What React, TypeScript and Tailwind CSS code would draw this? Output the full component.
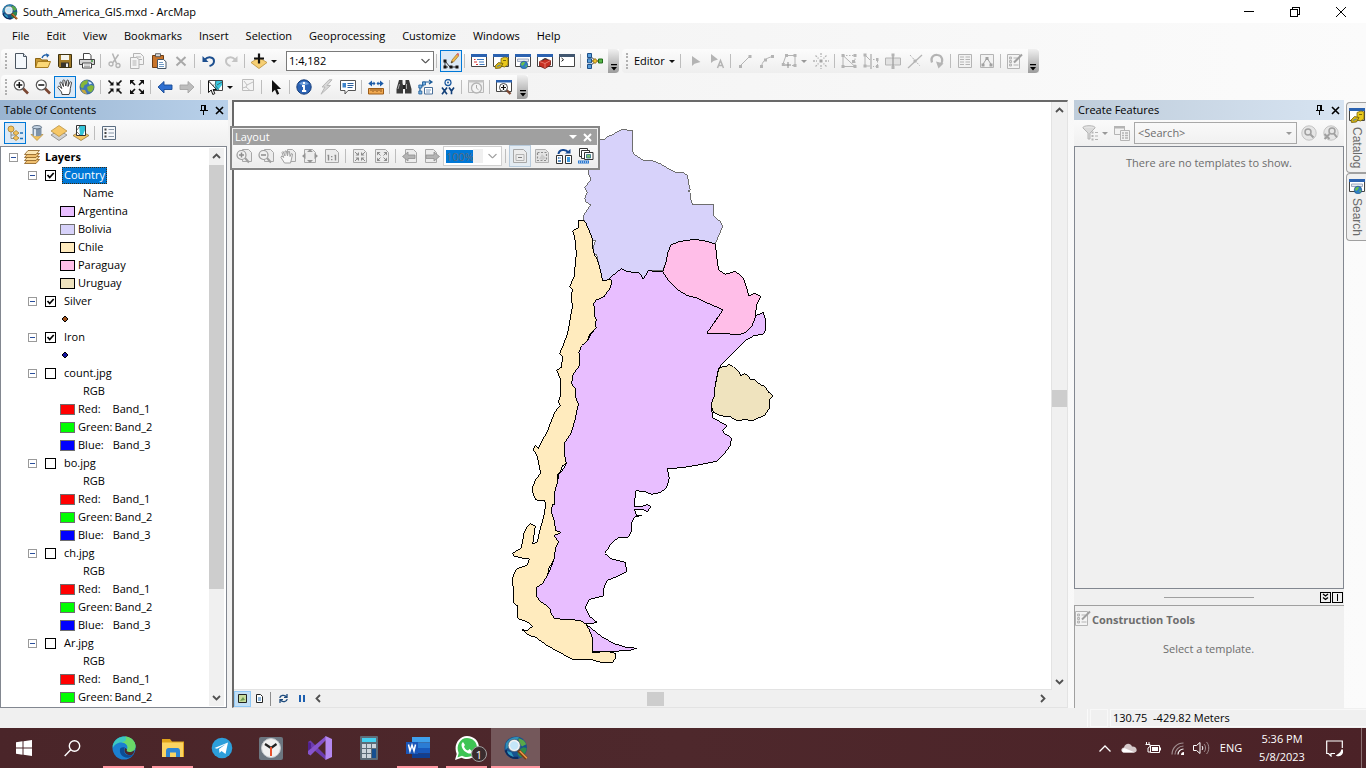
import React, { ReactNode, useState } from "react";

/* ---------- icon helpers ---------- */

function Svg({ children, className = "size-4", box = "0 0 16 16" }: { children: ReactNode; className?: string; box?: string }) {
  return (
    <svg viewBox={box} className={`${className} shrink-0`} fill="none" aria-hidden="true">
      {children}
    </svg>
  );
}

const G = "#b4b4b4";
const GL = "#e2e2e2";

const Globe = () => (
  <>
    <circle cx="7.8" cy="7.800" r="7.500" fill="#17528f" />
    <path d="M1.200 5C3 1.500 7 0 10 .9L8.500 3 5 3.500 3.500 7 1 9z" fill="#2f8fb8" />
    <path d="M9.500 1.500c2.500.3 4.500 2 5.300 4L12 7l-2-2.500z" fill="#58a848" />
    <path d="M10 9l3-1.500 2 .5c0 3-2 5.300-4 6.300L9 12z" fill="#2f8a4c" />
    <path d="M1 9.500C2.500 13.500 6 15.200 9.500 14.500" stroke="#0c2c60" strokeWidth="1.500" />
    <path d="M2 10l3 1 1.500 3C4 13.500 2.500 12 2 10z" fill="#2c9ac0" />
  </>
);

const icons: Record<string, ReactNode> = {
  arcmap: (
    <>
      <Globe />
      <path d="M9.500 9.500l5.500 5.500" stroke="#7a3b12" strokeWidth="2.200" />
      <path d="M10.500 10l4.800 4.800" stroke="#eb9a4c" strokeWidth="1" />
      <circle cx="6.800" cy="6.300" r="3.400" fill="#c4e6f8" stroke="#f2f2f2" strokeWidth="1.200" />
      <circle cx="6.800" cy="6.300" r="4.100" stroke="#5a6b78" strokeWidth=".5" />
    </>
  ),
  newDoc: (
    <>
      <path d="M2.500.5h8l3 3v12h-11z" fill="#f4f8fc" stroke="#4a5560" />
      <path d="M10.500.5v3h3" fill="#dbe6f2" stroke="#4a5560" />
    </>
  ),
  open: (
    <>
      <path d="M.5 14.500v-9h5l1 1.500h6v7.500z" fill="#c99a35" stroke="#8a6414" />
      <path d="M2.500 8.500h13l-2.500 6H.7z" fill="#fbd877" stroke="#a87c20" />
      <path d="M7 5c1-3 3-3.500 5-3" stroke="#1f5fa8" strokeWidth="1.300" />
      <path d="M11 .3L14.500 2 12 4.800z" fill="#1f5fa8" />
    </>
  ),
  save: (
    <>
      <path d="M1.500 1.500h13v13h-12l-1-1z" fill="#a07a28" stroke="#3e3210" />
      <path d="M4 2h8v5H4z" fill="#f4f4ee" />
      <path d="M4 9.500h8V14H4z" fill="#38342c" />
      <path d="M9 10.500h2V14H9z" fill="#eee" />
    </>
  ),
  print: (
    <>
      <path d="M4.500.5h6l1.500 2v5H4.500z" fill="#fff" stroke="#444" />
      <path d="M.5 6.500h15v5H.5z" fill="#d6d6d6" stroke="#444" />
      <path d="M3.500 10h9v5h-9z" fill="#fff" stroke="#444" />
      <path d="M5 12h6M5 13.500h6" stroke="#888" strokeWidth=".7" />
      <path d="M12 8h2" stroke="#3c9a3c" strokeWidth="1.500" />
    </>
  ),
  cut: (
    <>
      <path d="M5.500.5l4 10M11.500 1.500l-5.500 8" stroke={G} strokeWidth="1.500" />
      <circle cx="4" cy="11" r="2" stroke={G} strokeWidth="1.300" />
      <circle cx="11" cy="12.500" r="2" stroke={G} strokeWidth="1.300" />
    </>
  ),
  copy: (
    <>
      <path d="M4.500.5h7l3 3v8h-10z" fill="#f4f4f4" stroke={G} />
      <path d="M1.500 4.500h6l2.500 2v9H1.500z" fill="#f4f4f4" stroke={G} />
      <path d="M3.500 8h4M3.500 10h4M3.500 12h4M7 4h5M10 6.500h3" stroke={G} />
    </>
  ),
  paste: (
    <>
      <path d="M1.500 2.500h11v12h-11z" fill="#c8742a" stroke="#6d3c12" />
      <path d="M4.500.7h5v3h-5z" fill="#d8d8d8" stroke="#444" strokeWidth=".8" />
      <path d="M6.500 6.500h6l2.500 2.200v6.800H6.500z" fill="#fff" stroke="#456" />
      <path d="M8 9.500h4M8 11.500h5M8 13.500h5" stroke="#4c82b8" strokeWidth=".8" />
    </>
  ),
  del: <path d="M3.500 4l9 8.500M12.500 4l-9 8.500" stroke="#a8a8a8" strokeWidth="2" />,
  undo: (
    <>
      <path d="M4 6.500C7 3 13 4 13 8c0 3-2.500 4.500-4.500 5" stroke="#1d4f8f" strokeWidth="2" />
      <path d="M1.500 3v6h6z" fill="#1d4f8f" />
    </>
  ),
  redo: (
    <>
      <path d="M12 6.500C9 3 3 4 3 8c0 3 2.500 4.500 4.500 5" stroke="#c4c4c4" strokeWidth="2" />
      <path d="M14.500 3v6h-6z" fill="#c4c4c4" />
    </>
  ),
  addData: (
    <>
      <path d="M8 4.500l8 5-8 6-8-6z" fill="#f6cf74" stroke="#b98f38" strokeWidth=".8" />
      <path d="M8 .5v10M3 5.500h10" stroke="#111" strokeWidth="2.200" />
    </>
  ),
  editorTb: (
    <>
      <path d="M2 8l5 6 5 0M2 8v6h3M12 14h3" stroke="#222" strokeWidth=".9" />
      <path d="M.5 6.500h3v3h-3zM.5 12.500h3v3h-3zM6.500 12.500h3v3h-3zM12.500 12.500h3v3h-3z" fill="#111" />
      <path d="M8 10l1-3L14 1l2 1.500L10.500 9z" fill="#f0b84a" stroke="#8a6424" strokeWidth=".6" />
      <path d="M14 .6l2 1.500" stroke="#d86a6a" strokeWidth="2" />
      <path d="M8 10.300l2-1.200-1.200-1z" fill="#222" />
    </>
  ),
  tableWin: (
    <>
      <path d="M.5 1.500h15v12H.5z" fill="#fff" stroke="#444" />
      <path d="M0 1h16v3H0z" fill="#2b62b0" />
      <path d="M3 6.500h1.500M3 9h3M5 11.500h2" stroke="#d33" strokeWidth="1.200" />
      <path d="M6 6.500h7M8 9h5M8.500 11.500h5" stroke="#3b78c0" strokeWidth="1.200" />
    </>
  ),
  catalogWin: (
    <>
      <path d="M.5 1.500h15v12H.5z" fill="#fff" stroke="#444" />
      <path d="M0 1h16v3H0z" fill="#2b62b0" />
      <path d="M8 5.500l4-1.500 3 1V12l-3.500 2-3.500-1z" fill="#e8c81c" stroke="#7d680a" strokeWidth=".8" />
      <path d="M10 7.500h3" stroke="#7d680a" />
      <path d="M2 13l3.500-3.500 4.500 1-2.500 4.500-5 .5z" fill="#d6b412" stroke="#6d5a08" strokeWidth=".8" />
      <path d="M4 13.500l3.500-1.500" stroke="#5c86a6" strokeWidth="1.300" />
    </>
  ),
  searchWin: (
    <>
      <path d="M.5 1.500h15v12H.5z" fill="#fff" stroke="#444" />
      <path d="M0 1h16v3H0z" fill="#2b62b0" />
      <path d="M2.500 6h11v2.500h-11z" fill="#e5eaf2" stroke="#8a98b0" strokeWidth=".8" />
      <circle cx="9" cy="12" r="3.800" fill="#2f7fc4" stroke="#1a4d80" strokeWidth=".6" />
      <path d="M6 11c1-2 3-2.300 4-1.700L9 11.500l-2 1.500zM10 13l2.300-1-1 2.500z" fill="#6cc04a" />
    </>
  ),
  toolboxWin: (
    <>
      <path d="M.5 1.500h15v12H.5z" fill="#fff" stroke="#444" />
      <path d="M0 1h16v3H0z" fill="#2b62b0" />
      <path d="M2.500 8.500l6-2.500 5 1.500v4.500l-5.500 3.500-5.500-2.500z" fill="#c62f22" stroke="#6f1610" strokeWidth=".8" />
      <path d="M2.500 8.500L8 10.500l5.500-3M8 10.500V15" stroke="#f08a7c" strokeWidth=".8" />
      <path d="M5.500 7L8 5.500l2.500 1" stroke="#333" strokeWidth="1.100" />
    </>
  ),
  pythonWin: (
    <>
      <path d="M.5 1.500h15v12H.5z" fill="#fff" stroke="#444" />
      <path d="M0 1h16v3H0z" fill="#41566f" />
      <path d="M2.500 5l2 1.700-2 1.700" stroke="#111" />
    </>
  ),
  model: (
    <>
      <path d="M3 3l6 5M3 8h8M3 13l6-5" stroke="#444" />
      <path d="M.5.5h4v4h-4zM.5 5.800h4v4h-4zM.5 11.500h4v4h-4z" fill="#5ba0dc" stroke="#1c4f88" />
      <path d="M5.500 8L8 5.500 10.500 8 8 10.500z" fill="#f2c12e" stroke="#8d6a0c" />
      <path d="M11.500 6h4v4h-4z" fill="#58b848" stroke="#226a1c" />
    </>
  ),
  zoomIn: (
    <>
      <path d="M10 9.500l5 5" stroke="#7a4632" strokeWidth="2.600" />
      <circle cx="6.300" cy="6" r="5" fill="#fff" stroke="#555" strokeWidth="1.200" />
      <path d="M6.300 3v6M3.300 6h6" stroke="#111" strokeWidth="1.500" />
    </>
  ),
  zoomOut: (
    <>
      <path d="M10 9.500l5 5" stroke="#7a4632" strokeWidth="2.600" />
      <circle cx="6.300" cy="6" r="5" fill="#fff" stroke="#555" strokeWidth="1.200" />
      <path d="M3.300 6h6" stroke="#111" strokeWidth="1.500" />
    </>
  ),
  pan: (
    <path
      d="M5 15.500L4.500 13 .8 8.500c0-1.500 1.200-1.500 2 -.8L4.800 9.500 2.800 4c.2-1.400 1.500-1.200 1.900-.2L6.500 7.500 5.800 1.800C6.200.5 7.500.6 7.800 1.800L8.800 7 9.800 1.800c.4-1.200 1.700-1 1.700.3L11 7.500l1.800-4.200c.8-1 1.900-.5 1.700.6L13.300 9.500l-.3 3.500-1 2.500z"
      fill="#fff"
      stroke="#333"
      strokeWidth=".9"
    />
  ),
  fullExtent: (
    <>
      <circle cx="8" cy="8" r="7" fill="#3f78b8" stroke="#23507e" strokeWidth=".8" />
      <path d="M2 5c2-3.500 5-4 7-3.500L8 5 5.500 6 4 9.500 1.500 8zM8 8l4-2 2.700 1c.2 3-1 5-3 6.300L9 12z" fill="#86b838" />
      <path d="M9 2.500c2 0 3.500 1 4 2l-2.500 1z" fill="#d8ecfa" />
      <path d="M2 10.500c1 3 3.500 4.500 6 4.500l-2-4z" fill="#c8a83c" />
    </>
  ),
  zoomInFixed: (
    <>
      <path d="M1.500 1.500l4 4M14.500 1.500l-4 4M1.500 14.500l4-4M14.500 14.500l-4-4" stroke="#111" strokeWidth="1.700" />
      <path d="M6.500 2.500v4h-4zM9.500 2.500v4h4zM6.500 13.500v-4h-4zM9.500 13.500v-4h4z" fill="#111" />
    </>
  ),
  zoomOutFixed: (
    <>
      <path d="M2.500 2.500l3.500 3.500M13.500 2.500L10 6M2.500 13.500L6 10M13.500 13.500L10 10" stroke="#111" strokeWidth="1.700" />
      <path d="M1 1h4.500L1 5.500zM15 1h-4.500L15 5.500zM1 15h4.500L1 10.500zM15 15h-4.500l4.500-4.500z" fill="#111" />
    </>
  ),
  back: <path d="M1 8l6-5.500V6h8v4.500H7V14z" fill="#2f6fd0" stroke="#174a94" strokeWidth=".9" />,
  forward: <path d="M15 8L9 2.500V6H1v4.500h8V14z" fill="#bdbdbd" stroke="#a5a5a5" strokeWidth=".9" />,
  selectFeat: (
    <>
      <path d="M1.500 1.500h14v10h-14z" fill="#fff" stroke="#444" />
      <path d="M8 2h7v4l-4 5H8z" fill="#38c8e0" />
      <path d="M9 2L8 6l4 5M10 6l5-3M2 8l5-2" stroke="#444" strokeWidth=".7" />
      <path d="M1.500 2v11.500l2.700-2.500 1.600 4.500 2-.9L6.100 10.500h3.500z" fill="#fff" stroke="#111" />
    </>
  ),
  clearSel: (
    <>
      <path d="M2.500.5h11v11h-11z" fill="#f4f4f4" stroke="#bcbcbc" />
      <path d="M4 2l3 4 6-3M7 6l-1 2 4 3.500M6 8l-3.500 1" stroke="#c0c0c0" />
    </>
  ),
  pointer: <path d="M4 1v12.500l3-2.800 2 5 2.200-1-2.100-4.700h4z" fill="#111" />,
  identify: (
    <>
      <circle cx="8" cy="8" r="7.200" fill="#2a62b4" stroke="#173f7c" />
      <path d="M3 5c2-3.500 8-3.500 10 0-3 1.500-7 1.500-10 0z" fill="#6f9fdc" />
      <path d="M8 3v2M6 7h2v5M6 12h4.200" stroke="#fff" strokeWidth="1.900" />
    </>
  ),
  hyperlink: <path d="M11 .8L4 8h3l-4 7.200L12.500 6.500H9l5-5.700z" fill="#d8d8d8" stroke="#b8b8b8" />,
  popup: (
    <>
      <path d="M.5 1.500h15v10H8l-3 3.500v-3.500H.5z" fill="#fff" stroke="#555" />
      <path d="M2.500 4h3.500v4.500H2.500z" fill="#3d84cc" />
      <path d="M7.500 4.500h6M7.500 6.500h6M7.500 8.500h5" stroke="#2b5f9c" />
    </>
  ),
  measure: (
    <>
      <path d="M.5 9.500h15v5.500H.5z" fill="#f0a850" stroke="#9c5c18" />
      <path d="M3 10v2M5 10v3M7 10v2M9 10v3M11 10v2M13 10v3" stroke="#7a4410" strokeWidth=".8" />
      <path d="M2 4.500h5M9 4.500h5" stroke="#1d5ca8" strokeWidth="1.500" />
      <path d="M4 1.500L.3 4.500 4 7.500zM12 1.500l3.700 3-3.700 3zM5.500 2.500L7.500 4.500l-2 2zM10.500 2.500L8.500 4.500l2 2z" fill="#1d5ca8" />
    </>
  ),
  find: (
    <>
      <path d="M3 1h3.500v3L7 6v8.500H.5V10zM13 1H9.500v3L9 6v8.500h6.500V10z" fill="#3a3a3a" />
      <path d="M7 6h2v4H7z" fill="#222" />
      <path d="M3.500 5L2 10M10.500 5v5" stroke="#a8a8a8" />
    </>
  ),
  findRoute: (
    <>
      <path d="M2 14V7h3v-4h8M11 1l3 2-3 2" stroke="#1d5c98" strokeWidth="1.200" />
      <path d="M.8 12h3v3h-3zM.8 6h3v3h-3zM4.500 3h3v3h-3z" fill="#7ab4e4" stroke="#1d5c98" strokeWidth=".8" />
      <path d="M6.500 8.500h8v6.500h-8z" fill="#fff" stroke="#4a6f98" />
      <path d="M8 11h5M8 13h4" stroke="#7c9cc0" />
    </>
  ),
  gotoXY: (
    <>
      <circle cx="8" cy="3.500" r="3" stroke="#1b5aa0" strokeWidth="1.300" />
      <circle cx="8" cy="3.500" r="1" fill="#1b5aa0" />
      <path d="M2 8.500l5 6.800M7 8.500l-5 6.800M9 8.500l2.500 3.500L14 8.500M11.500 12v3.300" stroke="#123f78" strokeWidth="1.600" />
    </>
  ),
  timeSlider: (
    <>
      <path d="M.5 1.500h15v12H.5z" fill="#efefef" stroke="#b8b8b8" />
      <path d="M0 1h16v2.500H0z" fill="#c4c4c4" />
      <circle cx="8.500" cy="9" r="5" fill="#f4f4f4" stroke="#b4b4b4" strokeWidth="1.300" />
      <path d="M8.500 6v3.200l2 1.500" stroke="#a8a8a8" />
    </>
  ),
  viewer: (
    <>
      <path d="M.5 1.500h15v11H.5z" fill="#fff" stroke="#444" />
      <path d="M0 1h16v2.500H0z" fill="#2b62b0" />
      <path d="M10.500 11l4 4" stroke="#7a4632" strokeWidth="2.400" />
      <circle cx="7.500" cy="8.500" r="4" fill="#fff" stroke="#444" />
      <path d="M7.500 6v5M5 8.500h5" stroke="#111" strokeWidth="1.200" />
    </>
  ),
  edit1: <path d="M5 3v10l2.500-2.200 6-1.800z" fill={G} />,
  edit2: (
    <>
      <path d="M2 1v9l2.500-2L9 6.500z" fill={G} />
      <path d="M8.500 15l3-7.500 3 7.500M9.500 12.500h4" stroke={G} strokeWidth="1.500" />
    </>
  ),
  segLine: (
    <>
      <path d="M3 13L13 3" stroke={G} />
      <path d="M2 12h3v3H2zM11.500 2h3v3h-3z" fill={G} />
    </>
  ),
  segArc: (
    <>
      <path d="M2.500 14C3 9 6 5 14 3.500" stroke={G} />
      <path d="M1 12h3v3H1zM5 5.500h3v3H5zM12 2h3v3h-3z" fill={G} />
    </>
  ),
  trace: (
    <>
      <path d="M5 2.500h9v10h-3M5 2.500L2 11l2 2" stroke={G} />
      <path d="M4 1h3v3H4zM12.500 1h3v3h-3zM12.500 11h3v3h-3zM.8 10h3v3h-3z" fill={G} />
      <path d="M7 9v6M4 12h6" stroke="#8c8c8c" />
    </>
  ),
  point: (
    <>
      <path d="M8 0v4M8 12v4M0 8h4M12 8h4M2.500 2.500l3 3M13.500 2.500l-3 3M2.500 13.500l3-3M13.500 13.500l-3-3" stroke={G} strokeDasharray="2 1" strokeWidth="1.300" />
      <path d="M6.500 6.500h3v3h-3z" fill="#a4a4a4" />
    </>
  ),
  editVert: (
    <>
      <path d="M2 2.500h12v11" stroke={G} strokeDasharray="1.500 1.500" />
      <path d="M2 2.500v11h12L2 2.500" stroke={G} />
      <path d="M.5 1h3v3h-3zM.5 12h3v3h-3zM12.500 12h3v3h-3zM12.500 1h3v3h-3zM11 7h3v3h-3z" fill={G} />
    </>
  ),
  reshape: (
    <>
      <path d="M2 2v11h5M2 2l5 5" stroke={G} />
      <path d="M8 1v15" stroke="#999" />
      <path d="M10 6.500h4.500v7H10" stroke={G} strokeDasharray="1.500 1.500" />
      <path d="M.5.500h3v3h-3zM.5 11.500h3v3h-3zM13 5h2.500v3H13zM13 12h2.500v3H13z" fill={G} />
    </>
  ),
  cutPoly: (
    <>
      <path d="M.5 5h15v7H.5z" fill={GL} stroke={G} />
      <path d="M8 2v13" stroke="#999" strokeWidth="1.200" />
      <path d="M6.500.500h3v3h-3zM6.500 13h3v3h-3z" fill={G} />
    </>
  ),
  split: (
    <>
      <path d="M1 15L15 2" stroke={G} strokeWidth="1.300" />
      <path d="M3 2l10 11" stroke={G} strokeDasharray="2 1.500" />
      <path d="M6.500 6.500h3v3h-3z" fill={G} />
    </>
  ),
  rotate: (
    <>
      <path d="M3 9.500C1 4 5 1.500 8.500 2c5 .5 6 6 3 9.500" stroke={G} strokeWidth="2.200" />
      <path d="M7 8.500l7.500 2-5 5z" fill={G} />
    </>
  ),
  attrTable: (
    <>
      <path d="M1.500 1.500h13v13h-13z" fill="#f2f2f2" stroke={G} />
      <path d="M3 4h4M3 6.500h4M3 9h4M3 11.500h4M8.500 4H13M8.500 6.500H13M8.500 9H13M8.500 11.500H13" stroke={G} />
    </>
  ),
  sketchProp: (
    <>
      <path d="M1.500 1.500h13v13h-13z" fill="#f2f2f2" stroke={G} />
      <path d="M3.500 12L8 5l4.500 7" stroke="#a0a0a0" />
      <path d="M2.500 10.500h3v3h-3zM6.500 4h3v3h-3zM10.500 10.500h3v3h-3z" fill="#a0a0a0" />
    </>
  ),
  createFeat: (
    <>
      <path d="M.5 1.500h12v14H.5z" fill="#f4f4f4" stroke={G} />
      <path d="M2.500 4h2v2h-2zM2.500 7.500h2v2h-2zM2.500 11h2v2h-2z" stroke={G} fill="#ddd" />
      <path d="M6.500 5h4M6.500 12h5" stroke={G} />
      <path d="M7 9.500L15 1.500" stroke="#a0a0a0" strokeWidth="2" />
    </>
  ),
  tocOrder: (
    <>
      <circle cx="4" cy="4" r="3" fill="#f4c35c" stroke="#9c7424" strokeWidth=".7" />
      <path d="M4 7v6.500h5M4 10h4" stroke="#777" strokeWidth=".8" />
      <path d="M9 5.500l3 2.500-3 2.500L6 8zM9 10.500l3 2.500-3 2.500L6 13z" fill="#f4c35c" stroke="#9c7424" strokeWidth=".7" />
      <path d="M13 8h3M13 13.500h3" stroke="#1d6fb8" strokeWidth="1.500" />
    </>
  ),
  tocSource: (
    <>
      <path d="M2 9.500h12l-6 6z" fill="#f4c35c" stroke="#b08838" strokeWidth=".7" />
      <path d="M3.500 2v8c0 1.800 9 1.800 9 0V2z" fill="#7f93a8" />
      <path d="M5 3v8h2V3z" fill="#dce6f0" />
      <ellipse cx="8" cy="2.200" rx="4.500" ry="1.700" fill="#c4d4e4" stroke="#4a5c70" strokeWidth=".8" />
    </>
  ),
  tocVisible: (
    <>
      <path d="M8 5l8 5-8 5.500L0 10z" fill="#d0d0d0" stroke="#777" strokeWidth=".7" />
      <path d="M8 .5l8 5.500-8 5.500L0 6z" fill="#f6c766" stroke="#b08838" strokeWidth=".7" />
    </>
  ),
  tocSelect: (
    <>
      <path d="M8 6l8 4.500-8 5L0 10.500z" fill="#f6c766" stroke="#8d6f30" strokeWidth=".7" />
      <path d="M3.500.500h9v10h-9z" fill="#fff" stroke="#333" />
      <path d="M6 1h6v4l-2 5H7z" fill="#34c4d8" />
      <path d="M4 5l3-4M7 10l-3-3" stroke="#444" strokeWidth=".7" />
    </>
  ),
  tocOptions: (
    <>
      <path d="M1.500 1.500h13v13h-13z" fill="#f6f8fb" stroke="#5a6c80" />
      <path d="M3.500 3.500h2v2h-2zM3.500 7h2v2h-2zM3.500 10.500h2v2h-2z" fill="#444" />
      <path d="M7.500 4.500H13M7.500 8H13M7.500 11.500H13" stroke="#8a98a8" />
    </>
  ),
  layers: (
    <>
      <path d="M4 10.500h11.500L12 14.500H.5z" fill="#f0c070" stroke="#8a5c1c" strokeWidth=".8" />
      <path d="M4 7.500h11.500L12 11.500H.5z" fill="#fadb9a" stroke="#8a5c1c" strokeWidth=".8" />
      <path d="M4 4.500h11.500L12 8.500H.5z" fill="#f0c070" stroke="#8a5c1c" strokeWidth=".8" />
      <path d="M4 1.500h11.500L12 5.500H.5z" fill="#fde7b4" stroke="#8a5c1c" strokeWidth=".8" />
    </>
  ),
  pgZoomIn: (
    <>
      <path d="M6.500 1.500h6l3 3v9h-9z" fill="#ececec" stroke="#a8a8a8" />
      <path d="M9 10l4 4.500" stroke="#a0a0a0" strokeWidth="2" />
      <circle cx="5.500" cy="7" r="4.500" fill="#f0f0f0" stroke="#9c9c9c" strokeWidth="1.200" />
      <path d="M5.500 4.500v5M3 7h5" stroke="#8c8c8c" strokeWidth="1.500" />
    </>
  ),
  pgZoomOut: (
    <>
      <path d="M6.500 1.500h6l3 3v9h-9z" fill="#ececec" stroke="#a8a8a8" />
      <path d="M9 10l4 4.500" stroke="#a0a0a0" strokeWidth="2" />
      <circle cx="5.500" cy="7" r="4.500" fill="#f0f0f0" stroke="#9c9c9c" strokeWidth="1.200" />
      <path d="M3 7h5" stroke="#8c8c8c" strokeWidth="1.500" />
    </>
  ),
  pgPan: (
    <>
      <path d="M7.500 1.500h5l3 3v9h-8z" fill="#ececec" stroke="#a8a8a8" />
      <path d="M4.500 15L1 9.500 1.700 8l2 1.500L2 4.500l1-1L5 8V3h1.300L7.500 8l.8-4.500h1.200L10 8.500l1.500-3 1 .5-1 5-1 4z" fill="#f8f8f8" stroke="#a0a0a0" />
    </>
  ),
  pgWhole: (
    <>
      <path d="M2.500 1.500h8l3 3v10h-11z" fill="#ececec" stroke="#a8a8a8" />
      <path d="M8 1l3 3H5zM8 15l3-3H5zM0 8l3.500-3v6zM16 8l-3.500-3v6z" fill="#959595" />
    </>
  ),
  pg100: (
    <>
      <path d="M1.500 1.500h10l3 3v10h-13z" fill="#ececec" stroke="#a8a8a8" />
      <path d="M3.500 7.500h1v5M10.500 7.500h1v5M7.700 8v1.200M7.700 11v1.200" stroke="#8c8c8c" strokeWidth="1.400" />
    </>
  ),
  pgFixIn: (
    <>
      <path d="M1.500 1.500h10l3 3v10h-13z" fill="#ececec" stroke="#a8a8a8" />
      <path d="M3 4l3 3M13 4l-3 3M3 13l3-3M13 13l-3-3" stroke="#8c8c8c" />
      <path d="M7 4v3.500H3.500zM9 4v3.500h3.500zM7 13V9.500H3.500zM9 13V9.500h3.500z" fill="#8c8c8c" />
    </>
  ),
  pgFixOut: (
    <>
      <path d="M1.500 1.500h10l3 3v10h-13z" fill="#ececec" stroke="#a8a8a8" />
      <path d="M3.500 4.500l3 3M12.500 4.500l-3 3M3.500 12.500l3-3M12.500 12.500l-3-3" stroke="#8c8c8c" />
      <path d="M3 4h3.500L3 7.500zM13 4H9.500L13 7.500zM3 13h3.500L3 9.500zM13 13H9.500L13 9.500z" fill="#8c8c8c" />
    </>
  ),
  pgBack: (
    <>
      <path d="M3.500 1.500h8l3 3v10h-11z" fill="#ececec" stroke="#a8a8a8" />
      <path d="M.5 8.500L6 4v3h7v3.500H6V13z" fill="#b4b4b4" stroke="#909090" strokeWidth=".8" />
    </>
  ),
  pgFwd: (
    <>
      <path d="M1.500 1.500h8l3 3v10h-11z" fill="#ececec" stroke="#a8a8a8" />
      <path d="M15.500 8.500L10 4v3H2v3.500h8V13z" fill="#b4b4b4" stroke="#909090" strokeWidth=".8" />
    </>
  ),
  draft: (
    <>
      <path d="M1.500 1.500h10l3 3v10h-13z" fill="#ececec" stroke="#a8a8a8" />
      <path d="M4 6.500h8v6H4z" stroke={G} />
      <path d="M6 9.500h4" stroke="#808080" />
    </>
  ),
  focus: (
    <>
      <path d="M1.500 1.500h10l3 3v10h-13z" fill="#e4e4e4" stroke="#b0b0b0" />
      <path d="M3.500 4.500h9v8h-9z" stroke="#8c8c8c" strokeDasharray="2 1.500" strokeWidth="1.200" />
      <path d="M5 11l3-5 4 4-3 2z" fill="#cacaca" />
    </>
  ),
  changeLayout: (
    <>
      <path d="M.5 7.500h6v8h-6zM9.500 7.500h6v8h-6z" fill="#fff" stroke="#333" />
      <path d="M11 9h3v5h-3z" fill="#3d9ae0" />
      <path d="M2 10h1.500M4.500 10H5M2 13h3" stroke="#2b6fb0" strokeWidth="1.500" />
      <path d="M2.500 6C3 1 10 1 12 4" stroke="#174a94" strokeWidth="2" />
      <path d="M9 5.500h5.500V1z" fill="#174a94" />
    </>
  ),
  dataDriven: (
    <>
      <path d="M1.500.500h8v8h-8z" fill="#fff" stroke="#333" />
      <path d="M3.500 2.500h8v8h-8z" fill="#fff" stroke="#333" />
      <path d="M6.500 4.500h8.500v7H6.500z" fill="#fff" stroke="#333" />
      <path d="M8.500 6.500h4v3.500h-4z" fill="#7fc06a" stroke="#2d6f8c" strokeWidth=".8" />
      <path d="M0 12.500h11v3H0z" fill="#2b78d0" />
      <path d="M1 14h9" stroke="#fff" strokeDasharray="1 1" />
    </>
  ),
  filter: (
    <>
      <ellipse cx="7" cy="2.500" rx="6" ry="1.800" fill="#e4e4e4" stroke={G} />
      <path d="M1 3l5 5v6h2V8l5-5" fill="#dadada" stroke={G} />
      <path d="M9.500 6.500h2v2h-2zM9.500 10h2v2h-2zM9.500 13.500h2v2h-2z" fill={G} />
      <path d="M13 7.500h3M13 11h3M13 14.500h3" stroke={G} />
    </>
  ),
  organize: (
    <>
      <path d="M.5 1.500h10v8H.5z" fill="#f2f2f2" stroke={G} />
      <path d="M0 1h11v2.500H0z" fill={G} />
      <path d="M6.500 5.500h9v10h-9z" fill="#f2f2f2" stroke={G} />
      <path d="M8 8h2M8 10.500h2M8 13h2M11 8h3M11 10.500h3M11 13h3" stroke={G} strokeWidth="1.300" />
    </>
  ),
  searchGo: (
    <>
      <circle cx="8" cy="8" r="7.200" fill="#e6e6e6" stroke="#c4c4c4" />
      <circle cx="7" cy="7" r="3" stroke="#a0a0a0" strokeWidth="1.500" />
      <path d="M9.500 9.500l3 3" stroke="#a0a0a0" strokeWidth="2" />
    </>
  ),
  searchClear: (
    <>
      <circle cx="8" cy="8" r="7.200" fill="#e6e6e6" stroke="#c4c4c4" />
      <circle cx="9" cy="6" r="3" stroke="#a0a0a0" strokeWidth="1.500" />
      <path d="M11 8.500l3 4M1.500 9l5 5M6.500 9l-5 5" stroke="#a0a0a0" strokeWidth="2" />
    </>
  ),
};

function Icon({ name, className }: { name: string; className?: string }) {
  return <Svg className={className}>{icons[name]}</Svg>;
}

/* ---------- toolbar parts ---------- */

function Tool({ name, label, active, off }: { name: string; label: string; active?: boolean; off?: boolean }) {
  return (
    <button
      aria-label={label}
      disabled={off}
      className={`flex h-[22px] w-[22px] shrink-0 items-center justify-center ${active ? "border border-[#0078d7] bg-[#dbe9f6]" : ""}`}
    >
      <Icon name={name} />
    </button>
  );
}

const Sep = () => <span className="mr-[3px] ml-[2px] h-3.5 w-px shrink-0 bg-[#bdbdbd]" />;
const Grip = () => <span className="mr-[3px] ml-1 h-4 w-0 shrink-0 border-l-2 border-dotted border-[#b0b0b0]" />;

function Caret({ color = "#111", label }: { color?: string; label: string }) {
  return (
    <button aria-label={label} className="flex h-[22px] w-2 shrink-0 items-center justify-center">
      <svg viewBox="0 0 6 3" className="h-[3px] w-1.5">
        <path d="M0 0h6L3 3z" fill={color} />
      </svg>
    </button>
  );
}

function Overflow() {
  return (
    <button aria-label="Toolbar options" className="ml-0.5 flex h-6 w-[11px] shrink-0 items-end justify-center rounded-r-sm bg-linear-to-b from-[#f0f0f0] to-[#9c9c9c] pb-0.5">
      <svg viewBox="0 0 6 7" className="h-[7px] w-1.5">
        <path d="M0 0h6v1.300H0zM0 3h6L3 6.500z" fill="#000" />
      </svg>
    </button>
  );
}

function Bar({ children }: { children: ReactNode }) {
  return <div className="flex h-6 items-center rounded-l bg-linear-to-b from-[#fcfcfc] to-[#eeeeee]">{children}</div>;
}

function Arrow({ dir, label, className = "" }: { dir: "up" | "down" | "left" | "right"; label: string; className?: string }) {
  const d = { up: "M1 6l3.500-3.500L8 6", down: "M1 3l3.500 3.500L8 3", left: "M6 1L2.500 4.500 6 8", right: "M3 1l3.500 3.500L3 8" }[dir];
  return (
    <button aria-label={label} className={`flex shrink-0 items-center justify-center ${className}`}>
      <svg viewBox="0 0 9 9" className="size-[9px]" fill="none">
        <path d={d} stroke="#505050" strokeWidth="1.800" />
      </svg>
    </button>
  );
}

function PanelTitle({ title, className }: { title: string; className: string }) {
  return (
    <div className={`flex h-5 shrink-0 items-center pr-px pl-1 ${className}`}>
      <h2 className="flex-1">{title}</h2>
      <button aria-label={`Pin ${title}`} className="flex size-4 items-center justify-center">
        <svg viewBox="0 0 9 10" className="h-2.5 w-[9px]" fill="none" stroke="#000">
          <path d="M2.500 5.500v-5h4v5M5.500 0v5.500M.5 5.500h8M4.500 6v4" shapeRendering="crispEdges" />
        </svg>
      </button>
      <button aria-label={`Close ${title}`} className="flex size-4 items-center justify-center">
        <svg viewBox="0 0 9 9" className="size-[9px]" fill="none">
          <path d="M1 1l7 7M8 1L1 8" stroke="#000" strokeWidth="1.600" />
        </svg>
      </button>
    </div>
  );
}

/* ---------- table of contents ---------- */

function Toggle({ label }: { label: string }) {
  return (
    <button aria-label={`Collapse ${label}`} className="flex size-[9px] shrink-0 items-center justify-center border border-[#9a9a9a] bg-white">
      <span className="h-px w-[5px] bg-[#2b4f9c]" />
    </button>
  );
}

function LayerRow({ name, on, selected }: { name: string; on?: boolean; selected?: boolean }) {
  const [checked, setChecked] = useState(!!on);
  return (
    <li className="flex h-[18px] items-center pl-[27px]">
      <Toggle label={name} />
      <label className="flex items-center">
        <span className="relative ml-2 flex size-[11px]">
          <input type="checkbox" checked={checked} onChange={() => setChecked(!checked)} className="size-[11px] appearance-none border border-black bg-white" />
          {checked && (
            <svg viewBox="0 0 11 11" className="pointer-events-none absolute inset-0 size-[11px]" fill="none">
              <path d="M2.500 5l2.200 2.500L8.700 3" stroke="#000" strokeWidth="1.700" />
            </svg>
          )}
        </span>
        <span className={`ml-1.5 flex items-center px-0.5 ${selected ? "h-[17px] bg-[#0078d7] text-white outline outline-dotted outline-[#3b2a10] -outline-offset-1" : ""}`}>{name}</span>
      </label>
    </li>
  );
}

function Swatch({ color, border = "#000", label, value }: { color: string; border?: string; label: string; value?: string }) {
  return (
    <li className="flex h-[18px] items-center pl-[59px]">
      <span className="h-[11px] w-[15px] border" style={{ backgroundColor: color, borderColor: border }} />
      <span className="ml-[3px]">{label}</span>
      {value && <span className={label === "Green:" ? "ml-[2px]" : label === "Red:" ? "ml-3" : "ml-[9px]"}>{value}</span>}
    </li>
  );
}

const Heading = ({ text }: { text: string }) => <li className="flex h-[18px] items-center pl-[82px]">{text}</li>;

const Marker = ({ color }: { color: string }) => (
  <li className="flex h-[18px] items-center pl-[61px]">
    <svg viewBox="0 0 6 6" className="size-1.5">
      <path d="M3 0l3 3-3 3-3-3z" fill={color} stroke="#000" />
    </svg>
  </li>
);

const countries = [
  { label: "Argentina", color: "#e8beff", border: "#000" },
  { label: "Bolivia", color: "#d7d2fa", border: "#6e6e6e" },
  { label: "Chile", color: "#ffebbe", border: "#000" },
  { label: "Paraguay", color: "#ffbee8", border: "#000" },
  { label: "Uruguay", color: "#efe3be", border: "#000" },
];

function Raster({ name, last }: { name: string; last?: boolean }) {
  return (
    <>
      <LayerRow name={name} />
      <Heading text="RGB" />
      <Swatch color="#f00" border="#6e6e6e" label="Red:" value="Band_1" />
      <Swatch color="#0f0" border="#6e6e6e" label="Green:" value="Band_2" />
      {!last && <Swatch color="#00f" border="#6e6e6e" label="Blue:" value="Band_3" />}
    </>
  );
}

function Contents() {
  return (
    <aside className="flex w-[228px] shrink-0 flex-col">
      <PanelTitle title="Table Of Contents" className="bg-linear-to-r from-[#99b4d1] to-[#b9d1ea]" />
      <div className="flex h-[26px] shrink-0 items-center bg-linear-to-b from-[#fafafa] to-[#efefef] pl-1">
        <Tool name="tocOrder" label="List By Drawing Order" active />
        <Tool name="tocSource" label="List By Source" />
        <Tool name="tocVisible" label="List By Visibility" />
        <Tool name="tocSelect" label="List By Selection" />
        <Sep />
        <Tool name="tocOptions" label="Options" />
      </div>
      <div className="mr-px flex min-h-0 flex-1 border border-[#828790] bg-white py-px pr-px">
        <ul className="min-w-0 flex-1 overflow-hidden">
          <li className="flex h-[18px] items-center pl-2 font-bold">
            <Toggle label="Layers" />
            <Icon name="layers" className="ml-1.5 size-4" />
            <span className="ml-[5px]">Layers</span>
          </li>
          <LayerRow name="Country" on selected />
          <Heading text="Name" />
          {countries.map((c) => (
            <Swatch key={c.label} {...c} />
          ))}
          <LayerRow name="Silver" on />
          <Marker color="#a0521c" />
          <LayerRow name="Iron" on />
          <Marker color="#1414a0" />
          <Raster name="count.jpg" />
          <Raster name="bo.jpg" />
          <Raster name="ch.jpg" />
          <Raster name="Ar.jpg" last />
        </ul>
        <div className="mr-px flex w-[15px] flex-col bg-[#f0f0f0]">
          <Arrow dir="up" label="Scroll up" className="h-[17px]" />
          <div className="h-[424px] bg-[#cdcdcd]" />
          <span className="flex-1" />
          <Arrow dir="down" label="Scroll down" className="h-[17px]" />
        </div>
      </div>
    </aside>
  );
}

/* ---------- map ---------- */

const bolivia =
  "M290 60L314 58 320 50 340 44 350 36 362 30 374 28 386 32 398 31 398 95 404 104 430 121 455 121 480 131 500 143 523 156 550 158 562 166 566 190 571 210 563 211 571 218 573 240 577 253 640 253 639 285 662 306 668 320 655 350 646 372 620 364 585 358 535 366 512 376 503 400 497 430 488 452 445 452 430 478 418 458 382 455 365 446 350 457 332 478 308 482 300 446 290 405 280 402 280 380 287 362 278 360 265 330 256 305 250 300 252 285 272 255 258 245 254 235 262 217 254 203 268 185 273 178 267 165 264 155 270 120Z";

const andes =
  "335 484 332 502 320 518 312 530 287 541 281 552 285 580 284 590 289 600 285 612 289 622 270 641 262 662 245 677 237 697 240 735 218 765 215 792 226 805 228 835 235 852 225 900 213 940 192 972 194 1005 199 1030 187 1038 182 1055 173 1063 173 1085 164 1115 164 1152 153 1172 162 1200 167 1232 184 1237 162 1247 176 1265 166 1285 163 1315 147 1345 143 1365 128 1390 110 1402 110 1428 120 1444 138 1455 150 1468 155 1485 165 1496 240 1501 258 1512";

const chile = `M235 303L248 301 256 305 262 320 276 352 278 385 284 405 292 418 300 446 308 482 332 478 ${andes} 268 1530 278 1555 278 1598 320 1594 346 1600 346 1616 338 1627 305 1627 270 1618 218 1618 180 1598 140 1576 105 1550 88 1547 66 1529 80 1532 98 1519 82 1506 53 1495 53 1458 42 1450 40 1400 38 1395 38 1372 50 1346 82 1336 88 1317 70 1315 42 1308 38 1300 64 1284 72 1240 82 1220 92 1211 106 1219 98 1272 112 1265 120 1230 130 1195 138 1150 132 1140 118 1143 106 1137 98 1118 98 1100 108 1078 122 1060 112 1010 100 988 106 975 115 986 130 955 142 935 155 900 165 875 182 856 174 847 182 825 182 790 180 775 170 750 185 742 187 710 179 701 190 675 203 640 210 600 217 560 214 525 218 510 209 500 222 470 229 400 224 350 218 332 237 322Z`;

const argentina =
  "M308 482L320 482 350 457 365 446 382 455 418 458 430 478 445 452 488 456 505 480 535 510 560 526 590 534 620 548 669 569 648 600 620 640 722 643 740 635 755 620 765 588 780 582 790 577 798 605 798 630 790 642 760 648 735 662 664 735 655 748 645 800 644 830 633 852 638 893 682 918 668 930 672 940 694 953 692 975 670 1005 650 1024 600 1034 545 1043 502 1046 508 1075 499 1105 480 1118 455 1123 435 1115 407 1112 403 1158 425 1160 442 1153 452 1160 442 1176 430 1168 403 1168 410 1187 425 1187 405 1190 396 1205 396 1230 385 1251 355 1253 335 1268 325 1285 314 1300 335 1317 376 1327 380 1355 350 1370 322 1381 311 1405 309 1428 268 1438 256 1462 270 1490 292 1508 258 1512 240 1501 165 1496 155 1485 150 1468 138 1455 120 1444 110 1428 110 1402 128 1390 143 1365 152 1345 163 1315 166 1285 176 1265 162 1247 184 1237 167 1232 162 1200 153 1172 158 1153 164 1152 164 1115 173 1085 176 1063 187 1052 199 1030 194 1005 192 972 213 940 225 900 235 852 228 835 226 805 215 792 218 765 240 735 237 697 245 677 262 662 275 640 289 622 285 612 289 600 284 590 285 580 281 552 287 541 312 530 320 518 332 502 335 484 332 478Z";

const paraguay =
  "M488 456L497 430 503 400 512 376 535 365 585 358 620 364 646 372 650 410 656 450 676 463 707 454 730 475 740 505 747 527 765 520 782 529 770 555 765 595 755 620 740 635 722 643 620 640 645 605 669 569 620 548 590 534 560 526 535 510 505 480Z";

const uruguay =
  "M655 750L668 738 678 741 688 733 700 740 712 752 718 755 722 769 733 761 745 768 750 777 765 780 780 793 795 800 805 816 820 828 807 840 810 862 795 885 755 903 735 898 712 903 690 890 660 887 640 877 633 852 642 830 645 800Z";

function CountryMap() {
  return (
    <svg viewBox="234 102 817 587" preserveAspectRatio="xMidYMid meet" className="h-full w-full" role="img" aria-label="Map of southern South America">
      <g transform="translate(500 120) scale(.333333)" strokeWidth="3" shapeRendering="crispEdges">
        <path d={bolivia} fill="#d7d2fa" stroke="#6e6e6e" />
        <path d={chile} fill="#ffebbe" stroke="#000" />
        <path d={argentina} fill="#e8beff" stroke="#000" />
        <path d="M258 1512L305 1550 340 1570 375 1581 410 1585 385 1592 278 1596 278 1555 268 1530Z" fill="#e8beff" stroke="#000" />
        <path d={paraguay} fill="#ffbee8" stroke="#000" />
        <path d={uruguay} fill="#efe3be" stroke="#000" />
      </g>
    </svg>
  );
}

function MapView() {
  return (
    <main className="flex min-w-0 flex-1 flex-col border-t-2 border-r border-b border-l-2 border-t-[#696969] border-r-[#e3e3e3] border-b-[#e3e3e3] border-l-[#696969] bg-[#f0f0f0]">
      <div className="flex min-h-0 flex-1">
        <div className="min-w-0 flex-1 border-r border-b border-[#e3e3e3] bg-white">
          <CountryMap />
        </div>
        <div className="flex w-[15px] flex-col">
          <Arrow dir="up" label="Scroll map up" className="h-[17px]" />
          <span className="grow-[270]" />
          <div className="h-[17px] bg-[#cdcdcd]" />
          <span className="grow-[266]" />
          <Arrow dir="down" label="Scroll map down" className="h-[17px]" />
        </div>
      </div>
      <div className="flex h-[17px] shrink-0 items-center pr-4">
        <button aria-label="Data View" className="flex h-4 w-[17px] items-center justify-center border border-[#90c8f6] bg-[#c2dff5]">
          <svg viewBox="0 0 9 9" className="size-[9px]">
            <path d="M.5.5h8v8h-8z" fill="#c8dc9c" stroke="#222" />
            <path d="M2 7l3-4 2 3" fill="#6c9c50" />
          </svg>
        </button>
        <button aria-label="Layout View" className="flex h-4 w-[17px] items-center justify-center">
          <svg viewBox="0 0 9 9" className="size-[9px]">
            <path d="M1.500.5h4l2 2v6h-6z" fill="#fff" stroke="#222" />
            <path d="M3 4h3M3 6h3" stroke="#1c6fb8" />
          </svg>
        </button>
        <span className="mx-0.5 h-3.5 w-px bg-[#8c8c8c]" />
        <button aria-label="Refresh" className="flex h-4 w-5 items-center justify-center">
          <svg viewBox="0 0 9 9" className="size-[9px]" fill="none" stroke="#1c4a7c" strokeWidth="1.300">
            <path d="M.8 4C1 1.500 5.500 0 7.500 3M8.200 5C8 7.500 3.500 9 1.500 6M8 0v3.300H5M1 9V5.700h3" />
          </svg>
        </button>
        <button aria-label="Pause drawing" className="flex h-4 w-[17px] items-center justify-center">
          <svg viewBox="0 0 6 7" className="h-[7px] w-1.5">
            <path d="M0 0h2v7H0zM4 0h2v7H4z" fill="#1c5fb0" />
          </svg>
        </button>
        <Arrow dir="left" label="Scroll map left" className="h-4 w-[17px]" />
        <span className="grow-[320]" />
        <div className="h-3.5 w-[17px] bg-[#cdcdcd]" />
        <span className="grow-[371]" />
        <Arrow dir="right" label="Scroll map right" className="h-4 w-[17px]" />
      </div>
    </main>
  );
}

function LayoutToolbar() {
  return (
    <section aria-label="Layout" className="absolute top-[26px] left-[230px] w-[370px] border-2 border-[#868686] bg-[#f0f0f0] p-px">
      <div className="flex h-4 items-center bg-[#a0a0a0] pr-1 pl-0.5 text-white">
        <h2 className="flex-1">Layout</h2>
        <button aria-label="Layout toolbar options" className="flex w-2 justify-center">
          <svg viewBox="0 0 8 4" className="h-1 w-2">
            <path d="M0 0h8L4 4z" fill="#fff" />
          </svg>
        </button>
        <button aria-label="Close Layout toolbar" className="ml-1 flex size-3 items-center justify-center">
          <svg viewBox="0 0 9 9" className="size-[9px]" fill="none">
            <path d="M1 1l7 7M8 1L1 8" stroke="#fff" strokeWidth="2" />
          </svg>
        </button>
      </div>
      <div className="flex h-[22px] items-center bg-linear-to-b from-[#fafafa] to-[#ececec]">
        <Tool name="pgZoomIn" label="Zoom In on page" off />
        <Tool name="pgZoomOut" label="Zoom Out on page" off />
        <Tool name="pgPan" label="Pan page" off />
        <Tool name="pgWhole" label="Zoom Whole Page" off />
        <Tool name="pg100" label="Zoom to 100%" off />
        <Sep />
        <Tool name="pgFixIn" label="Fixed Zoom In on page" off />
        <Tool name="pgFixOut" label="Fixed Zoom Out on page" off />
        <Sep />
        <Tool name="pgBack" label="Previous page extent" off />
        <Tool name="pgFwd" label="Next page extent" off />
        <div className="relative mr-px flex h-5 flex-1 items-center border border-[#d0d0d0] bg-white pl-0.5">
          <select aria-label="Page zoom" disabled className="h-[13px] w-[27px] appearance-none bg-[#0078d7] leading-[13px] text-[#5b6b7c] opacity-100">
            <option>100%</option>
          </select>
          <span className="h-3.5 w-2.5 bg-[#f0f0f0]" />
          <Chevron color="#a0a0a0" />
        </div>
        <Sep />
        <span className="border border-[#b8cbdc] bg-[#e3ebf2]">
          <button aria-label="Toggle Draft Mode" disabled className="flex size-5 items-center justify-center">
            <Icon name="draft" />
          </button>
        </span>
        <Tool name="focus" label="Focus Data Frame" off />
        <Tool name="changeLayout" label="Change Layout" />
        <Tool name="dataDriven" label="Data Driven Pages" />
      </div>
    </section>
  );
}

function Chevron({ color = "#555" }: { color?: string }) {
  return (
    <svg viewBox="0 0 9 5" className="pointer-events-none absolute top-1/2 right-1 h-[5px] w-[9px] -translate-y-1/2" fill="none">
      <path d="M.5.5l4 4 4-4" stroke={color} strokeWidth="1.100" />
    </svg>
  );
}

/* ---------- right side ---------- */

function CreateFeatures() {
  return (
    <aside className="ml-1.5 flex w-[270px] shrink-0 flex-col">
      <PanelTitle title="Create Features" className="bg-linear-to-r from-[#bfcddb] to-[#d7e4f2]" />
      <div className="flex h-[26px] shrink-0 items-center bg-linear-to-b from-[#fafafa] to-[#f0f0f0] pr-0.5 pl-[5px]">
        <Tool name="filter" label="Filter templates" off />
        <Caret color="#999" label="Filter options" />
        <span className="w-0.5" />
        <Tool name="organize" label="Organize templates" off />
        <div className="relative mx-px flex h-[22px] min-w-0 flex-1 border border-[#a8a8a8]">
          <input aria-label="Search templates" defaultValue="<Search>" className="w-full bg-transparent pl-[3px] text-[#6d6d6d] outline-none" />
          <svg viewBox="0 0 6 3" className="absolute top-[9px] right-[4px] h-[3px] w-1.5">
            <path d="M0 0h6L3 3z" fill="#999" />
          </svg>
        </div>
        <Tool name="searchGo" label="Search" off />
        <Tool name="searchClear" label="Clear search" off />
      </div>
      <div className="flex-1 border border-[#828790] bg-[#f0f0f0] pt-2 text-center text-[#6d6d6d]">
        <p>There are no templates to show.</p>
      </div>
      <div className="flex h-4 shrink-0 items-center justify-end gap-px bg-[#f0f0f0] pr-px">
        <span className="mr-[65px] h-px w-[90px] bg-[#a0a0a0]" />
        <button aria-label="Collapse pane" className="flex size-[11px] items-center justify-center border border-black">
          <svg viewBox="0 0 7 8" className="h-2 w-[7px]" fill="none" stroke="#000">
            <path d="M1 1l2.500 2L6 1M1 4.500l2.500 2L6 4.500" strokeWidth="1.300" />
          </svg>
        </button>
        <button aria-label="Split pane" className="flex size-[11px] items-center justify-center border border-black">
          <span className="h-[7px] w-px bg-black" />
        </button>
      </div>
      <div className="h-[103px] shrink-0 border-t border-l border-[#a0a0a0] bg-[#f0f0f0] text-[#6d6d6d]">
        <h3 className="flex h-7 items-center font-bold">
          <Icon name="createFeat" className="-mt-1 size-4" />
          <span className="ml-px">Construction Tools</span>
        </h3>
        <p className="pt-[7px] pr-0.5 text-center">Select a template.</p>
      </div>
    </aside>
  );
}

function SideTab({ name, label, className }: { name: string; label: string; className: string }) {
  return (
    <button className={`flex w-5 flex-col items-center gap-1 rounded-l border border-r-0 border-[#a0a0a0] bg-[#f0f0f0] pt-1 ${className}`}>
      <Icon name={name} />
      <span className="font-['Liberation_Sans',sans-serif] text-xs text-[#6a6a6a] [writing-mode:vertical-rl]">{label}</span>
    </button>
  );
}

/* ---------- taskbar ---------- */

const taskIcons: { label: string; open?: boolean; active?: boolean; art: ReactNode }[] = [
  {
    label: "Microsoft Edge",
    open: true,
    art: (
      <>
        <circle cx="12" cy="12" r="11.500" fill="#1b7fd0" />
        <path d="M.8 9C3 2 9 .3 13 .5c6 .4 10.500 4.500 10.500 9.500 0 4-3 6-6 6-2.500 0-3.500-1.500-2.500-2.500C17 10 14 6.500 9.500 6.500 5 6.500 2 9 .8 12z" fill="#3cc8c0" />
        <path d="M13 .5c6 .4 10.500 4.500 10.500 9.500 0 4-3 6-6 6-2.500 0-3.500-1.500-2.500-2.500 2-3-1-7-5-7C15 5 15 2 13 .5z" fill="#6ad868" />
        <path d="M8 13c-1 6 4 9.500 9 8.500 2-.5 3.500-1.500 4.500-3-3.500 2-9.500.5-9.500-4 0-1.500.5-2.500 1-3-2.500-.8-4.500 0-5 1.500z" fill="#0c4c94" />
        <path d="M15 13.500c-1 1 0 2.500 2.500 2.500 2 0 3.500-.5 5-2-.5 3-1.500 4.500-3 5-4 .7-7-1.500-7-4.500 0-1.500.5-2.500 1-2.500z" fill="#4b272b" />
      </>
    ),
  },
  {
    label: "File Explorer",
    open: true,
    art: (
      <>
        <path d="M1 3h8l2 2.500h12V21H1z" fill="#e0a31a" />
        <path d="M1 6.500h21V21H1z" fill="#fcd462" />
        <path d="M5 21v-6c0-2 1-3 2.500-3h9c1.500 0 2.500 1 2.500 3v6h-4v-4.500H9V21z" fill="#2f86d4" />
      </>
    ),
  },
  {
    label: "Telegram",
    art: (
      <>
        <circle cx="12" cy="12" r="10.300" fill="#2d9fdb" />
        <path d="M4.500 12L18 6.500 15.500 18l-4-3-2 2-.5-4 7-5-9 4.800z" fill="#fff" />
      </>
    ),
  },
  {
    label: "Clock",
    art: (
      <>
        <rect x="0" y="1" width="24" height="23" rx="2" fill="#6c7680" />
        <circle cx="12" cy="12" r="9.500" fill="#f0f0f0" stroke="#c4c8cc" />
        <path d="M12 12L6 8M12 12l5.500-4" stroke="#222" strokeWidth="2.200" />
        <path d="M12 11v9" stroke="#e8502c" strokeWidth="2" />
      </>
    ),
  },
  {
    label: "Visual Studio",
    art: (
      <>
        <path d="M0 6l2.500-1.500L18 20v4L0 9z" fill="#6c3cb0" />
        <path d="M0 6l3 1v10l-3 1z" fill="#52218f" />
        <path d="M0 18l2.500 1.500L18 4V0L0 15z" fill="#8754cc" />
        <path d="M17.500 0L24 3v18l-6.500 3z" fill="#b488f0" />
      </>
    ),
  },
  {
    label: "Calculator",
    art: (
      <>
        <rect x="3" y="0" width="18" height="24" rx="1" fill="#5d6c78" />
        <path d="M5 2h14v4H5z" fill="#44d0f0" />
        <path d="M5 8h4v4H5zM10 8h4v4h-4zM15 8h4v4h-4zM5 13h4v4H5zM10 13h4v4h-4zM5 18h4v4H5zM10 18h4v4h-4z" fill="#ccd4dc" />
        <path d="M15 13h4v9h-4z" fill="#154f90" />
      </>
    ),
  },
  {
    label: "Word",
    open: true,
    art: (
      <>
        <path d="M6 1h18v5.500H6z" fill="#3fa0ec" />
        <path d="M6 6.500h18V12H6z" fill="#2b7cd4" />
        <path d="M6 12h18v5.500H6z" fill="#185abd" />
        <path d="M6 17.500h18V22H6z" fill="#103f91" />
        <path d="M0 6h12v12H0z" fill="#1a56b8" />
        <path d="M2.500 8.500L4 15l2-6 2 6 1.500-6.500" stroke="#fff" strokeWidth="1.500" fill="none" />
      </>
    ),
  },
  {
    label: "WhatsApp",
    open: true,
    art: (
      <>
        <path d="M0 24l1.700-6C-2 9 4 0 12 0c7 0 12 5 12 11.500S18 23 12 23c-2 0-4-.5-5.500-1.300z" fill="#fff" />
        <path d="M2.500 21.500l1.200-4.500C.5 10 5 2 12 2c5.500 0 10 4 10 9.500S17.500 21 12 21c-2 0-3.500-.5-5-1.300z" fill="#3ec454" />
        <path d="M8 6C5 8 7 13 10 15.500s7 3 7.500 0L14.500 13l-1.500 1.500C11 14 9.500 12 9 10.500L10 9z" fill="#fff" />
      </>
    ),
  },
  {
    label: "ArcMap",
    open: true,
    active: true,
    art: <g transform="scale(1.500)">{icons.arcmap}</g>,
  },
];

function Taskbar() {
  return (
    <footer className="flex h-10 shrink-0 bg-linear-to-r from-[#4a2529] via-[#4e282c] to-[#4b2227] text-white">
      <button aria-label="Start" className="flex w-12 items-center justify-center">
        <svg viewBox="0 0 16 16" className="size-4" fill="#fff">
          <path d="M0 2.200L6.500 1.300v6.200H0zM7.500 1.200L16 0v7.500H7.500zM0 8.500h6.500v6.200L0 13.800zM7.500 8.500H16V16l-8.500-1.200z" />
        </svg>
      </button>
      <button aria-label="Search Windows" className="mr-[3px] flex w-12 items-center justify-center">
        <svg viewBox="0 0 17 17" className="size-[17px]" fill="none" stroke="#fff" strokeWidth="1.400">
          <circle cx="10.500" cy="6" r="5.200" />
          <path d="M6.700 9.800L.7 16" />
        </svg>
      </button>
      {taskIcons.map((t) => (
        <button key={t.label} aria-label={t.label} className={`relative flex w-[49px] items-center justify-center ${t.active ? "bg-[#74585b]" : ""}`}>
          <Svg className="size-6" box="0 0 24 24">
            {t.art}
          </Svg>
          {t.label === "WhatsApp" && (
            <span className="absolute right-1 bottom-1.5 flex size-4 items-center justify-center rounded-full border border-[#a0a0a0] bg-[#3a2c2e] text-[11px] leading-none">1</span>
          )}
          {t.open && <span className={`absolute bottom-0 h-0.5 bg-[#ff97a1] ${t.active ? "inset-x-0" : "inset-x-1"}`} />}
        </button>
      ))}
      <span className="flex-1" />
      <button aria-label="Show hidden icons" className="flex w-6 items-center justify-center">
        <svg viewBox="0 0 12 7" className="h-[7px] w-3" fill="none">
          <path d="M.5 6.500L6 1l5.500 5.500" stroke="#fff" strokeWidth="1.300" />
        </svg>
      </button>
      <button aria-label="OneDrive" className="flex w-6 items-center justify-center">
        <svg viewBox="0 0 16 10" className="h-2.5 w-4">
          <path d="M3.500 9.500C-.5 9.500-.8 5 3 4.500 4 0 9.500-.5 11 3.500c5-.5 6.500 5.500 2 6z" fill="#d4c8c9" />
          <path d="M2 9.500c-2-2 0-5 2.500-4L14 9.500z" fill="#fff" />
        </svg>
      </button>
      <button aria-label="Battery" className="flex w-6 items-center justify-center">
        <svg viewBox="0 0 17 12" className="h-3 w-[17px]" fill="none" stroke="#fff">
          <path d="M5.500 3.500h9v7h-9zM15.500 5.500v3M1.500 0v2M4 0v2M.5 2.500h4.500v2L3 6v4h2.500" />
          <path d="M7 5h6v4H7z" fill="#fff" stroke="none" />
        </svg>
      </button>
      <button aria-label="Network" className="flex w-6 items-center justify-center">
        <svg viewBox="0 0 13 13" className="size-[13px]" fill="none" stroke="#a08e90" strokeWidth="1.200">
          <path d="M1 12.500C1 6 6 1 12.500 1M4 12.500C4 8 8 4 12.500 4" />
          <path d="M7 12.500C7 9.500 9.500 7 12.500 7" stroke="#fff" />
          <path d="M10 13c0-2 1-3 3-3v3z" fill="#fff" stroke="none" />
        </svg>
      </button>
      <button aria-label="Volume" className="flex w-6 items-center justify-center">
        <svg viewBox="0 0 17 14" className="h-3.5 w-[17px]" fill="none" stroke="#fff">
          <path d="M.5 4.500h3l3.500-3v11l-3.500-3h-3zM9 5c1 1 1 3 0 4" />
          <path d="M11 3c2 2 2 6 0 8M13.500 1c3 3 3 9 0 12" stroke="#a08e90" />
        </svg>
      </button>
      <button className="flex w-9 items-center justify-center text-[11px]">ENG</button>
      <button aria-label="Clock and calendar" className="flex w-[66px] flex-col items-center justify-center text-[11px] leading-[18px]">
        <span>5:36 PM</span>
        <span>5/8/2023</span>
      </button>
      <button aria-label="Notifications" className="mr-2 flex w-[38px] items-center justify-center">
        <svg viewBox="0 0 17 17" className="size-[17px]" fill="none" stroke="#fff" strokeWidth="1.200">
          <path d="M9 13.500H5V16l-2.500-2.500H.7V1h15.600v7" />
          <path d="M11 15.500c4 1 6.500-2.500 5-6-.2 3-2.500 4-5 6z" fill="#fff" />
        </svg>
      </button>
      <span className="mr-1 w-px bg-[#8a7072]" />
    </footer>
  );
}

/* ---------- application ---------- */

const menus = ["File", "Edit", "View", "Bookmarks", "Insert", "Selection", "Geoprocessing", "Customize", "Windows", "Help"];

export default function App() {
  return (
    <div className="flex h-screen flex-col overflow-hidden bg-linear-to-r from-[#f0f0f0] to-[#fbfbfb] font-['Open_Sans','Noto_Sans',sans-serif] text-[11px] leading-4 text-black">
      <header className="flex h-[23px] shrink-0 items-center bg-white pl-0.5">
        <Icon name="arcmap" />
        <h1 className="ml-[5px] flex-1">South_America_GIS.mxd - ArcMap</h1>
        <button aria-label="Minimize" className="flex w-[46px] justify-center">
          <span className="h-px w-2.5 bg-black" />
        </button>
        <button aria-label="Restore" className="flex w-[46px] justify-center">
          <svg viewBox="0 0 10 10" className="size-2.5" fill="none" stroke="#000" shapeRendering="crispEdges">
            <path d="M.5 2.500h7v7h-7zM2.500 2.500v-2h7v7h-2" />
          </svg>
        </button>
        <button aria-label="Close" className="mr-[2px] flex w-[46px] justify-center">
          <svg viewBox="0 0 10 10" className="size-2.5" fill="none" stroke="#000">
            <path d="M0 0l10 10M10 0L0 10" />
          </svg>
        </button>
      </header>

      <nav className="flex h-[26px] shrink-0 items-center gap-px pl-1">
        {menus.map((m) => (
          <button key={m} className="px-2">
            {m}
          </button>
        ))}
      </nav>

      <div className="flex h-[26px] shrink-0 items-start pl-px">
        <Bar>
          <Grip />
          <Tool name="newDoc" label="New" />
          <Tool name="open" label="Open" />
          <Tool name="save" label="Save" />
          <Tool name="print" label="Print" />
          <Sep />
          <Tool name="cut" label="Cut" off />
          <Tool name="copy" label="Copy" off />
          <Tool name="paste" label="Paste" />
          <Tool name="del" label="Delete" off />
          <Sep />
          <Tool name="undo" label="Undo" />
          <Tool name="redo" label="Redo" off />
          <Sep />
          <Tool name="addData" label="Add Data" />
          <Caret label="Add Data options" />
          <div className="relative ml-2 flex">
            <select aria-label="Map scale" className="h-5 w-[148px] appearance-none border border-[#7a7a7a] bg-white pl-0.5">
              <option>1:4,182</option>
            </select>
            <Chevron />
          </div>
          <Sep />
          <Tool name="editorTb" label="Editor Toolbar" active />
          <Sep />
          <Tool name="tableWin" label="Table Of Contents window" />
          <Tool name="catalogWin" label="Catalog window" />
          <Tool name="searchWin" label="Search window" />
          <Tool name="toolboxWin" label="ArcToolbox window" />
          <Tool name="pythonWin" label="Python window" />
          <Sep />
          <Tool name="model" label="ModelBuilder" />
          <Overflow />
        </Bar>
        <span className="w-[3px]" />
        <Bar>
          <Grip />
          <button className="flex items-center gap-1 px-[3px]">
            Editor
            <svg viewBox="0 0 6 3" className="h-[3px] w-1.5">
              <path d="M0 0h6L3 3z" fill="#111" />
            </svg>
          </button>
          <Sep />
          <Tool name="edit1" label="Edit Tool" off />
          <Tool name="edit2" label="Edit Annotation Tool" off />
          <Sep />
          <Tool name="segLine" label="Straight Segment" off />
          <Tool name="segArc" label="End Point Arc Segment" off />
          <Tool name="trace" label="Trace" off />
          <Caret color="#999" label="Trace options" />
          <span className="w-0.5" />
          <Tool name="point" label="Point" off />
          <Sep />
          <Tool name="editVert" label="Edit Vertices" off />
          <Tool name="reshape" label="Reshape Feature" off />
          <Tool name="cutPoly" label="Cut Polygons" off />
          <Tool name="split" label="Split Tool" off />
          <Tool name="rotate" label="Rotate Tool" off />
          <Sep />
          <Tool name="attrTable" label="Attributes" off />
          <Tool name="sketchProp" label="Sketch Properties" off />
          <Sep />
          <Tool name="createFeat" label="Create Features window" off />
          <Overflow />
        </Bar>
      </div>

      <div className="flex h-[25px] shrink-0 items-start pl-px">
        <Bar>
          <Grip />
          <Tool name="zoomIn" label="Zoom In" />
          <Tool name="zoomOut" label="Zoom Out" />
          <Tool name="pan" label="Pan" active />
          <Tool name="fullExtent" label="Full Extent" />
          <Sep />
          <Tool name="zoomInFixed" label="Fixed Zoom In" />
          <Tool name="zoomOutFixed" label="Fixed Zoom Out" />
          <Sep />
          <Tool name="back" label="Previous Extent" />
          <Tool name="forward" label="Next Extent" off />
          <Sep />
          <Tool name="selectFeat" label="Select Features" />
          <Caret label="Select Features options" />
          <span className="w-[3px]" />
          <Tool name="clearSel" label="Clear Selected Features" off />
          <Sep />
          <Tool name="pointer" label="Select Elements" />
          <Sep />
          <Tool name="identify" label="Identify" />
          <Tool name="hyperlink" label="Hyperlink" off />
          <Tool name="popup" label="HTML Popup" />
          <Sep />
          <Tool name="measure" label="Measure" />
          <Sep />
          <Tool name="find" label="Find" />
          <Tool name="findRoute" label="Find Route" />
          <Tool name="gotoXY" label="Go To XY" />
          <Sep />
          <Tool name="timeSlider" label="Time Slider" off />
          <Sep />
          <Tool name="viewer" label="Create Viewer Window" />
          <Overflow />
        </Bar>
      </div>

      <div className="relative flex min-h-0 flex-1">
        <Contents />
        <span className="w-1 shrink-0" />
        <MapView />
        <CreateFeatures />
        <div className="ml-0.5 flex shrink-0 flex-col pt-0.5">
          <SideTab name="catalogWin" label="Catalog" className="h-[71px]" />
          <SideTab name="searchWin" label="Search" className="h-[68px]" />
        </div>
        <LayoutToolbar />
      </div>

      <div className="flex h-5 shrink-0 items-center justify-end gap-0.5 bg-[#f0f0f0]">
        <span className="h-[18px] flex-1 border-r border-[#fafafa]" />
        <span className="h-[18px] w-[18px] border border-[#f8f8f8]" />
        <div className="flex h-[18px] w-64 items-center border border-r-0 border-[#f8f8f8] pl-0.5 whitespace-pre">130.75  -429.82 Meters</div>
      </div>

      <Taskbar />
    </div>
  );
}
